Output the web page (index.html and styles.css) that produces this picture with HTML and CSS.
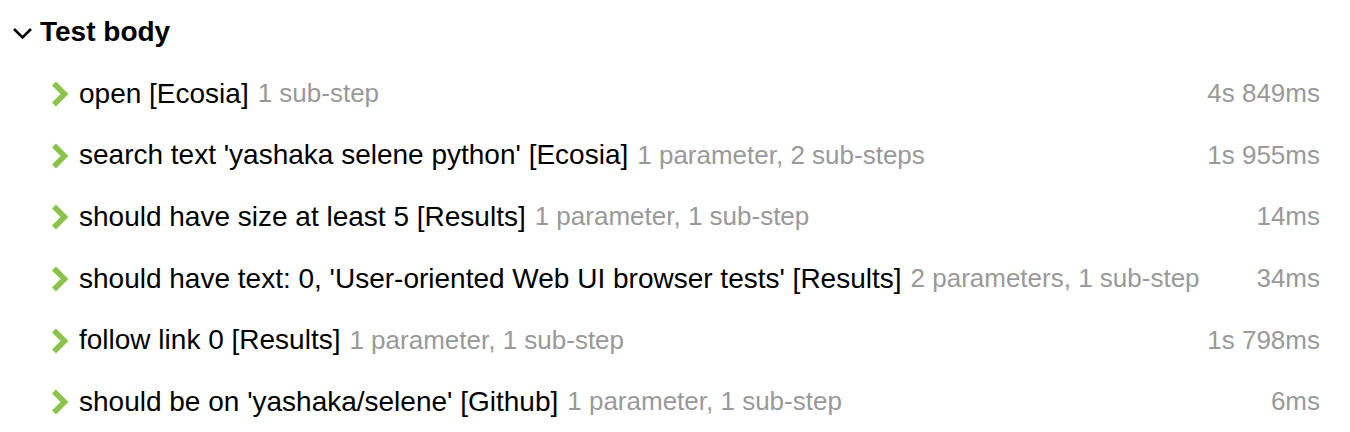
FILE: index.html
```html
<!DOCTYPE html>
<html>
<head>
<meta charset="utf-8">
<link rel="stylesheet" href="styles.css">
</head>
<body>
<div class="section">
  <div class="section-title">
    <svg class="caret" width="22" height="14" viewBox="0 0 22 14"><path d="M3 3 L11.5 11.5 L20 3" fill="none" stroke="#000" stroke-width="2.6"/></svg>
    <span>Test body</span>
  </div>
  <div class="steps">
    <div class="step"><svg class="arrow" width="18" height="26" viewBox="0 0 18 26"><path d="M3 2.5 L13.5 13 L3 23.5" fill="none" stroke="#8bc34a" stroke-width="5.5"/></svg><span class="name">open [Ecosia]</span><span class="meta">1 sub-step</span><span class="time">4s 849ms</span></div>
    <div class="step"><svg class="arrow" width="18" height="26" viewBox="0 0 18 26"><path d="M3 2.5 L13.5 13 L3 23.5" fill="none" stroke="#8bc34a" stroke-width="5.5"/></svg><span class="name">search text 'yashaka selene python' [Ecosia]</span><span class="meta">1 parameter, 2 sub-steps</span><span class="time">1s 955ms</span></div>
    <div class="step"><svg class="arrow" width="18" height="26" viewBox="0 0 18 26"><path d="M3 2.5 L13.5 13 L3 23.5" fill="none" stroke="#8bc34a" stroke-width="5.5"/></svg><span class="name">should have size at least 5 [Results]</span><span class="meta">1 parameter, 1 sub-step</span><span class="time">14ms</span></div>
    <div class="step"><svg class="arrow" width="18" height="26" viewBox="0 0 18 26"><path d="M3 2.5 L13.5 13 L3 23.5" fill="none" stroke="#8bc34a" stroke-width="5.5"/></svg><span class="name">should have text: 0, 'User-oriented Web UI browser tests' [Results]</span><span class="meta">2 parameters, 1 sub-step</span><span class="time">34ms</span></div>
    <div class="step"><svg class="arrow" width="18" height="26" viewBox="0 0 18 26"><path d="M3 2.5 L13.5 13 L3 23.5" fill="none" stroke="#8bc34a" stroke-width="5.5"/></svg><span class="name">follow link 0 [Results]</span><span class="meta">1 parameter, 1 sub-step</span><span class="time">1s 798ms</span></div>
    <div class="step"><svg class="arrow" width="18" height="26" viewBox="0 0 18 26"><path d="M3 2.5 L13.5 13 L3 23.5" fill="none" stroke="#8bc34a" stroke-width="5.5"/></svg><span class="name">should be on 'yashaka/selene' [Github]</span><span class="meta">1 parameter, 1 sub-step</span><span class="time">6ms</span></div>
  </div>
</div>
</body>
</html>
```

FILE: styles.css
```css
html, body {
  margin: 0;
  padding: 0;
  background: #fff;
}
body {
  font-family: "Liberation Sans", Arial, sans-serif;
  color: #000;
}
.section {
  padding: 13px 30px 0 10px;
}
.section-title {
  display: flex;
  align-items: center;
  gap: 7px;
  height: 38px;
  font-size: 28px;
  font-weight: bold;
}
.caret {
  margin-left: 1px;
  margin-top: 2px;
}
.steps {
  padding-top: 12px;
  padding-left: 41px;
}
.step {
  display: flex;
  align-items: center;
  height: 61.6px;
  font-size: 28px;
}
.arrow {
  flex: none;
  margin-right: 10px;
  margin-top: 1px;
}
.name {
  white-space: nowrap;
}
.meta {
  color: #999;
  font-size: 26px;
  margin-left: 9px;
  white-space: nowrap;
}
.time {
  margin-left: auto;
  color: #999;
  font-size: 26px;
  white-space: nowrap;
}
```
